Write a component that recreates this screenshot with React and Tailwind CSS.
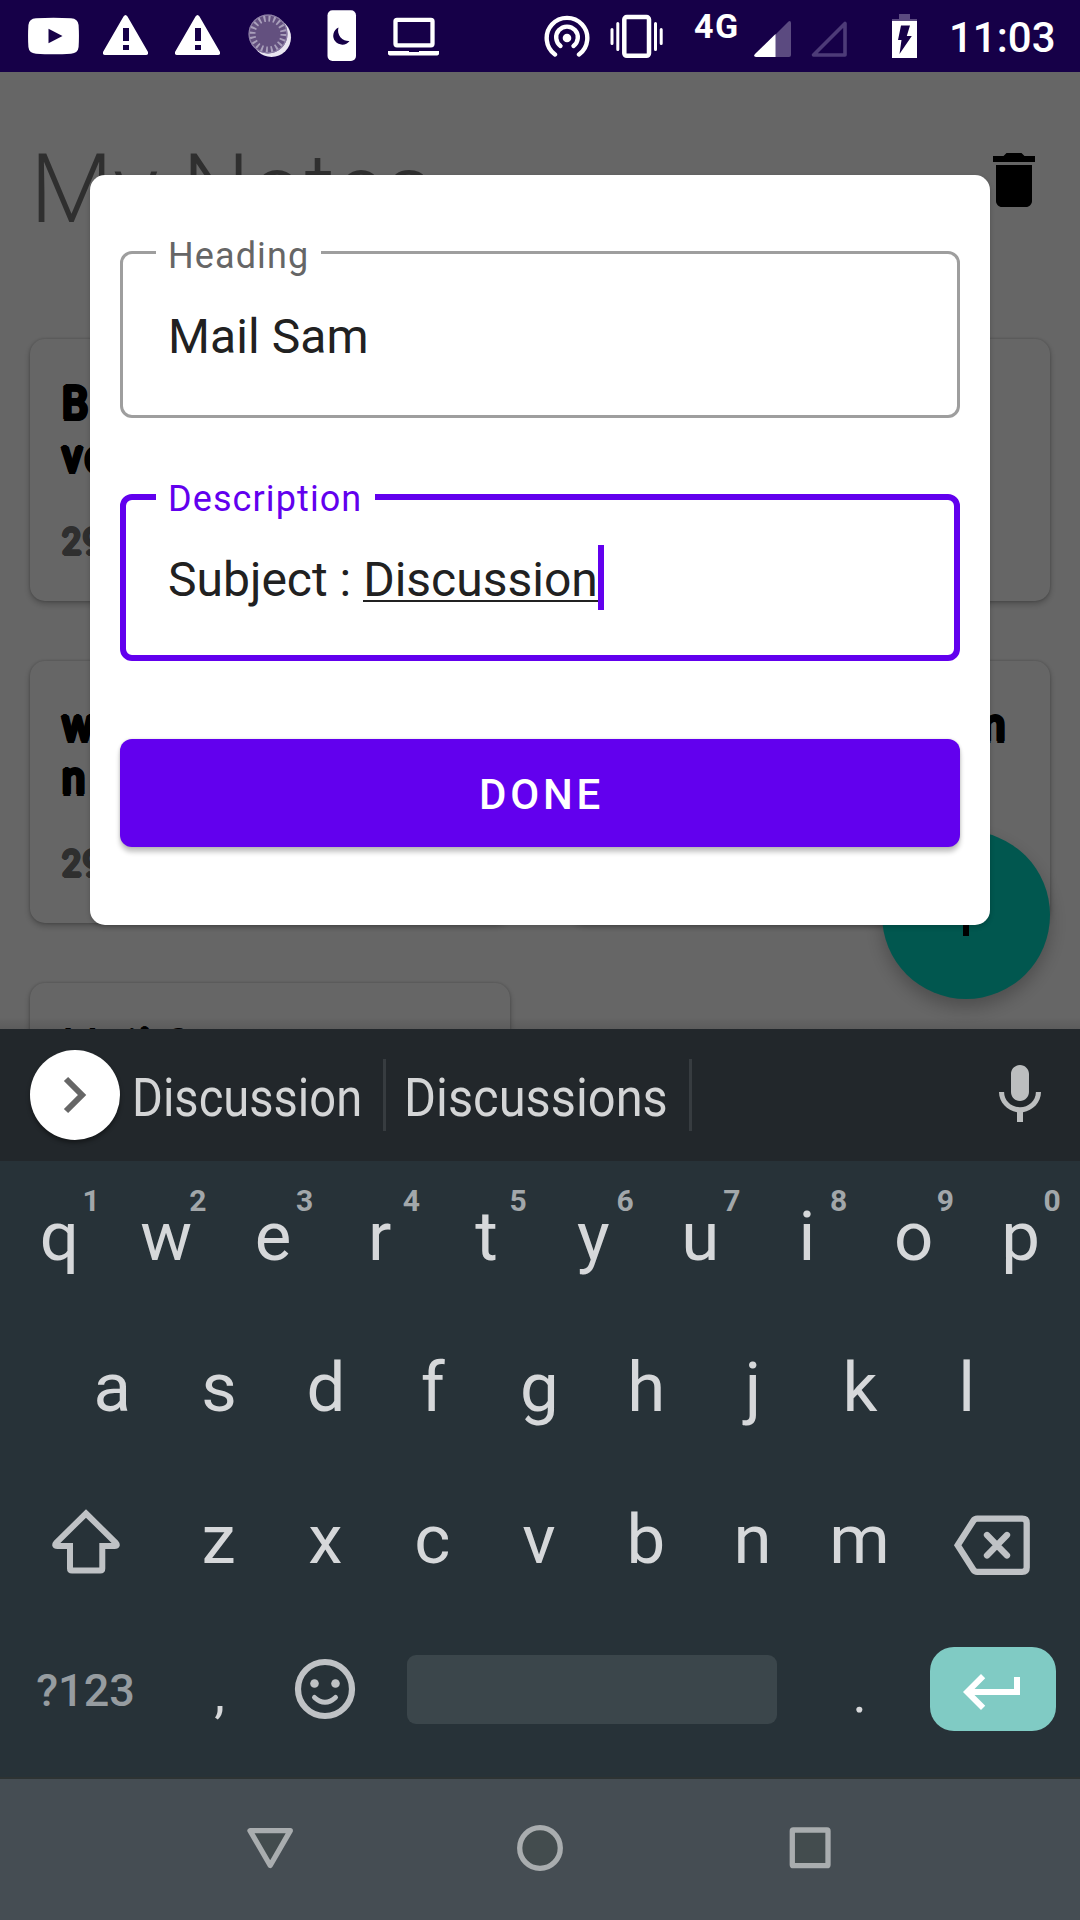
import React from "react";
import { MdDelete, MdMic } from "react-icons/md";

function StatusBar() {
  return (
    <header className="flex h-[72px] shrink-0 bg-[#160048] text-white">
      <svg className="ml-[28px] h-[72px] w-[51px]" viewBox="28 0 51 72">
        <path
          fillRule="evenodd"
          fill="#fff"
          d="M36 18.3Q53.500 17 71 18.300Q78 18.800 78.600 25Q79.300 36 78.600 47Q78 53.200 71 53.700Q53.500 55 36 53.700Q29 53.200 28.400 47Q27.700 36 28.400 25Q29 18.800 36 18.300zM48.500 28.800V43.200L62.500 36z"
        />
      </svg>
      <svg className="ml-[24px] h-[72px] w-[45px]" viewBox="0 0 45 72">
        <path
          fillRule="evenodd"
          fill="#fff"
          d="M20.500 16.500q2-3 4 0L45 52q.5 3-2 3H2q-2.500 0-2-3zM20 28v13h6V28zM20 45v5h6v-5z"
        />
      </svg>
      <svg className="ml-[27px] h-[72px] w-[45px]" viewBox="0 0 45 72">
        <path
          fillRule="evenodd"
          fill="#fff"
          d="M20.500 16.500q2-3 4 0L45 52q.5 3-2 3H2q-2.500 0-2-3zM20 28v13h6V28zM20 45v5h6v-5z"
        />
      </svg>
      <svg className="ml-[28px] h-[72px] w-[46px]" viewBox="248 0 46 72">
        <circle cx="271.500" cy="37.500" r="19.500" fill="#e9e5f0" />
        <circle cx="268" cy="34" r="19.500" fill="#63507f" />
        <circle
          cx="268"
          cy="34"
          r="15.500"
          fill="none"
          stroke="#a99fbb"
          strokeWidth="6"
          strokeDasharray="1.900 2.970"
        />
        <circle cx="268" cy="34" r="18.900" fill="none" stroke="#8d7fa6" strokeWidth="1.200" />
      </svg>
      <svg className="ml-[33px] h-[72px] w-[30px]" viewBox="327 0 30 72">
        <rect x="327.500" y="10.300" width="28.500" height="50.700" rx="5" fill="#fff" />
        <path fill="#160048" d="M338.500 27.500A9 9 0 1 0 349.500 41A10.500 10.500 0 0 1 338.500 27.500z" />
      </svg>
      <svg className="ml-[31px] h-[72px] w-[51px]" viewBox="388 0 51 72">
        <rect x="395.500" y="19.800" width="37" height="25.500" rx="1.500" fill="none" stroke="#fff" strokeWidth="4.300" />
        <path fill="#fff" d="M388 51h21v1h10v-1h20v2.500q0 2-3 2H391q-3 0-3-2z" />
      </svg>
      <svg className="ml-[105px] h-[72px] w-[46px]" viewBox="544 0 46 72">
        <g fill="none" stroke="#fff" strokeWidth="4.400" strokeLinecap="round">
          <path d="M555 54.500A20.300 20.300 0 1 1 579 54.500" />
          <path d="M560.500 46A10.800 10.800 0 1 1 573.500 46" />
        </g>
        <circle cx="567" cy="38" r="4.300" fill="#fff" />
      </svg>
      <svg className="ml-[20px] h-[72px] w-[54px]" viewBox="610 0 54 72">
        <rect x="624.300" y="17" width="24.700" height="38.800" rx="2.500" fill="none" stroke="#fff" strokeWidth="4.500" />
        <path stroke="#fff" strokeWidth="3" strokeLinecap="round" d="M617.800 23.500V49.500M612 29.500V43.500M655.500 23.500V49.500M661.200 29.500V43.500" />
      </svg>
      <span className="ml-[30px] mt-[5px] w-[45px] text-[34px] font-bold leading-[42px] tracking-[1.5px]">4G</span>
      <svg className="ml-[15px] h-[72px] w-[38px]" viewBox="754 0 38 72">
        <path fill="#5b4a80" d="M775 35L788.500 21.500q2-1.500 2.500 1V55q0 2-2 2H775z" />
        <path fill="#fff" d="M775.500 34V57H756q-3.200-.5-1-3z" />
      </svg>
      <svg className="ml-[18px] h-[72px] w-[40px]" viewBox="810 0 40 72">
        <path fill="none" stroke="#4d3b78" strokeWidth="3.600" strokeLinejoin="round" d="M845 23.500V55H813.500z" />
      </svg>
      <svg className="ml-[41px] h-[72px] w-[28px]" viewBox="891 0 28 72">
        <path fill="#5b4a80" d="M899 14h11v5h7v3h-25v-3h7z" />
        <path fill="#fff" d="M892 21h25v37h-25z" />
        <path fill="#160048" d="M901 25.500h9L906.800 36h5L899.500 54l2-14h-3.500z" />
      </svg>
      <span className="ml-[30px] mt-[13px] text-[42px] font-medium leading-[50px]">11:03</span>
    </header>
  );
}

// The shadows thicken each glyph evenly, which rounds its corners.
function NoteCard({ lines, date, right }) {
  return (
    <article className="h-[262px] w-[480px] rounded-[15px] bg-white pl-[32px] pr-[42px] pt-[38px] shadow-[0_3px_6px_rgba(0,0,0,0.25),0_0_3px_rgba(0,0,0,0.2)]">
      <div
        className={
          "scale-x-[0.9] whitespace-pre text-[46.5px] leading-[53px] tracking-[3px] text-black [text-shadow:2.4px_0_#000,-2.4px_0_#000,0_2px_#000,0_-2px_#000,1.7px_1.5px_#000,-1.7px_1.5px_#000,1.7px_-1.5px_#000,-1.7px_-1.5px_#000] " +
          (right ? "origin-right text-right" : "origin-left")
        }
      >
        {lines.map((line, i) => (
          <p key={i} className="h-[53px]">
            {line}
          </p>
        ))}
      </div>
      <p className="mt-[35px] origin-left scale-x-[0.94] text-[36px] leading-[48px] tracking-[2px] text-[#757575] [text-shadow:1.9px_0_#757575,-1.9px_0_#757575,0_1.8px_#757575,0_-1.8px_#757575,1.3px_1.3px_#757575,-1.3px_1.3px_#757575,1.3px_-1.3px_#757575,-1.3px_-1.3px_#757575]">
        {date}
      </p>
    </article>
  );
}

function NotesPage() {
  return (
    <section className="h-full bg-white">
      <div className="flex h-[267px] justify-between pl-[30px] pr-[30px]">
        <h1 className="mt-[61px] text-[96px] font-light leading-[112px] text-black/54">My Notes</h1>
        <MdDelete className="mt-[72px] size-[72px] text-black" />
      </div>
      <div className="grid grid-cols-2 gap-x-[60px] gap-y-[60px] px-[30px]">
        <NoteCard lines={["B", "ve"]} date="29" />
        <NoteCard lines={[]} />
        <NoteCard lines={["w", "n"]} date="29" />
        <NoteCard lines={["n"]} right />
        <NoteCard lines={["Mail Sam"]} />
      </div>
    </section>
  );
}

function NoteDialog() {
  return (
    <div className="absolute left-[90px] top-[103px] flex h-[750px] w-[900px] flex-col rounded-[15px] bg-white px-[30px] pt-[76px] shadow-[0_2px_5px_rgba(0,0,0,0.2)]">
      <div className="relative h-[167px] rounded-[12px] border-[3px] border-[#9e9e9e] pl-[45px] pt-[55px]">
        <label className="absolute left-[33px] top-[-19px] w-[165px] bg-white pl-[12px] text-[36px] leading-[42px] tracking-[1.1px] text-[#666]">
          Heading
        </label>
        <p className="text-[48px] leading-[56px] tracking-[0.1px] text-[#212121]">Mail Sam</p>
      </div>
      <div className="relative mt-[76px] h-[167px] rounded-[12px] border-[6px] border-[#6200ee] pl-[42px] pt-[52px]">
        <label className="absolute left-[30px] top-[-22px] w-[219px] bg-white pl-[12px] text-[36px] leading-[42px] tracking-[1.1px] text-[#6200ee]">
          Description
        </label>
        <p className="flex text-[48px] leading-[56px] text-[#212121]">
          <span className="whitespace-pre">Subject : </span>
          <span className="h-[50px] border-b-2 border-[#212121]">Discussion</span>
          <span className="-mt-[7px] h-[65px] w-[6px] bg-[#6200ee]" />
        </p>
      </div>
      <button className="mt-[78px] h-[108px] rounded-[12px] bg-[#6200ee] pl-[3px] pt-[2px] text-[42px] font-medium tracking-[3.75px] text-white shadow-[0_5px_5px_rgba(0,0,0,0.24),0_0_3px_rgba(0,0,0,0.15)]">
        DONE
      </button>
    </div>
  );
}

function SuggestionBar() {
  return (
    <div className="flex h-[132px] shrink-0 items-center bg-[#22272b] text-[54px] leading-[64px] text-[#d4d5d6]">
      <div className="-mt-[1px] ml-[30px] size-[90px] rounded-full bg-white shadow-[0_3px_4px_rgba(0,0,0,0.4)]">
        <svg className="size-[90px]" viewBox="0 0 90 90">
          <path fill="none" stroke="#666" strokeWidth="6" d="M36 29L52 45L36 61" />
        </svg>
      </div>
      <div className="w-[263px] pl-[12px] pt-[6px]">
        <span className="inline-block origin-left scale-x-[0.872]">Discussion</span>
      </div>
      <div className="h-[72px] w-[3px] bg-[#373c40]" />
      <div className="w-[303px] pl-[18px] pt-[6px]">
        <span className="inline-block origin-left scale-x-[0.904]">Discussions</span>
      </div>
      <div className="h-[72px] w-[3px] bg-[#373c40]" />
      <MdMic className="ml-auto mr-[24px] size-[72px] text-[#bcbebf]" />
    </div>
  );
}

function Key({ label, hint }) {
  return (
    <div className="relative flex w-[106.8px] items-center justify-center">
      {label}
      {hint && (
        <span className="absolute left-[75px] top-[22px] w-[20px] text-center text-[30px] font-bold leading-[36px] text-[#a2a7aa]">
          {hint}
        </span>
      )}
    </div>
  );
}

function Keyboard() {
  return (
    <div className="h-[618px] shrink-0 border-b-2 border-[#2d3333] bg-[#273238] text-[69px] leading-[80px] text-[#d6d8da]">
      <div className="flex h-[151px] justify-center">
        {"qwertyuiop".split("").map((c, i) => (
          <Key key={c} label={c} hint={String((i + 1) % 10)} />
        ))}
      </div>
      <div className="flex h-[151px] justify-center pr-[1px]">
        {"asdfghjkl".split("").map((c) => (
          <Key key={c} label={c} />
        ))}
      </div>
      <div className="flex h-[151px] justify-center">
        <svg className="h-[151px] w-[160.200px]" viewBox="6 1463 160.200 151">
          <path
            fill="none"
            stroke="#bfc2c5"
            strokeWidth="6"
            d="M86 1513.500L115.500 1542.500Q118.500 1546 114.500 1546H102.300V1568.500Q102.300 1570.500 100.300 1570.500H72Q70 1570.500 70 1568.500V1546H57.500Q53.500 1546 56.500 1542.500z"
          />
        </svg>
        <div className="-ml-[1px] mr-[1px] flex pt-[2px]">
          {"zxcvbnm".split("").map((c) => (
            <Key key={c} label={c} />
          ))}
        </div>
        <svg className="h-[151px] w-[160.200px]" viewBox="913.800 1463 160.200 151">
          <g fill="none" stroke="#bfc2c5" strokeWidth="6.300">
            <path d="M957.500 1545.300L973 1521Q974.500 1518.700 977 1518.700H1022Q1026.500 1518.700 1026.500 1523V1567.500Q1026.500 1571.800 1022 1571.800H977Q974.500 1571.800 973 1569.500z" />
            <path strokeLinecap="round" d="M986.800 1535L1006.800 1555.500M1006.800 1535L986.800 1555.500" />
          </g>
        </svg>
      </div>
      <div className="flex h-[151px] items-center pl-[6px]">
        <div className="w-[159px] pt-[2px] text-center text-[45px] font-medium text-[#969ca0]">?123</div>
        <div className="ml-[1px] w-[107px] pt-[9px] text-center text-[54px]">,</div>
        <svg className="h-[151px] w-[107px]" viewBox="273 1614 107 151">
          <circle cx="325" cy="1689" r="27" fill="none" stroke="#bfc2c5" strokeWidth="6.200" />
          <circle cx="314.500" cy="1683.500" r="4.300" fill="#bfc2c5" />
          <circle cx="335.500" cy="1683.500" r="4.300" fill="#bfc2c5" />
          <path fill="none" stroke="#bfc2c5" strokeWidth="5" strokeLinecap="round" d="M314.500 1697.500Q325 1707 335.500 1697.500" />
        </svg>
        <div className="ml-[27px] h-[69px] w-[370px] rounded-[9px] bg-[#3b464b]" />
        <div className="ml-[29px] w-[107px] pt-[9px] text-center text-[54px]">.</div>
        <div className="-mt-[1px] ml-[17px] h-[84px] w-[126px] rounded-[24px] bg-[#80cbc4]">
          <svg className="ml-[27px] mt-[9px] size-[72px]" viewBox="0 0 24 24">
            <path fill="#fff" d="M19 7v4H5.830l3.580-3.590L8 6l-6 6 6 6 1.410-1.410L5.830 13H21V7z" />
          </svg>
        </div>
      </div>
    </div>
  );
}

function NavBar() {
  return (
    <nav className="flex h-[141px] shrink-0 items-center justify-center gap-[198px] bg-[#454d53] pb-[3px]">
      <svg className="size-[72px]" viewBox="234 1812 72 72">
        <path fill="#434c4e" stroke="#a9adaf" strokeWidth="5.300" strokeLinejoin="round" d="M250 1830.700H290.300L270.200 1865.500z" />
      </svg>
      <svg className="size-[72px]" viewBox="504 1812 72 72">
        <circle cx="540" cy="1848" r="20.300" fill="#434c4e" stroke="#a9adaf" strokeWidth="5.300" />
      </svg>
      <svg className="size-[72px]" viewBox="774 1812 72 72">
        <rect x="792.300" y="1830" width="35.700" height="35.700" rx="1" fill="#434c4e" stroke="#a9adaf" strokeWidth="5.300" />
      </svg>
    </nav>
  );
}

export default function App() {
  return (
    <div className="flex h-[1920px] w-[1080px] flex-col overflow-hidden font-['Roboto',sans-serif]">
      <StatusBar />
      <main className="relative h-[957px] shrink-0 overflow-hidden">
        <NotesPage />
        <div className="absolute left-[882px] top-[759px] size-[168px] rounded-full bg-[#03dac5] shadow-[0_8px_18px_rgba(0,0,0,0.25)]">
          <svg className="size-[168px]" viewBox="0 0 168 168">
            <path stroke="#000" strokeWidth="6" d="M84 63V105M63 84H105" />
          </svg>
        </div>
        <div className="absolute inset-0 bg-black/60" />
        <div className="absolute inset-x-0 bottom-0 h-[12px] bg-linear-to-b from-transparent to-black/10" />
        <NoteDialog />
      </main>
      <SuggestionBar />
      <Keyboard />
      <NavBar />
    </div>
  );
}
